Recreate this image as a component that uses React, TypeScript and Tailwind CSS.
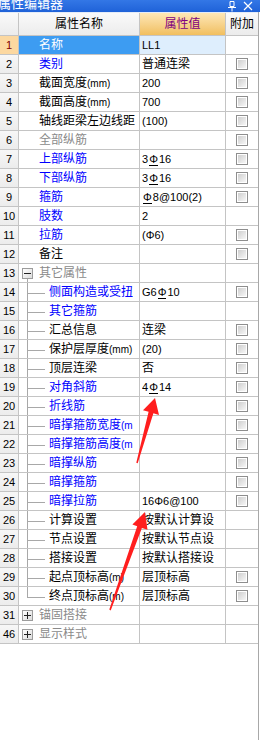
import React from 'react';

type Row = {
  n: number;
  name: string;
  val?: string;
  cb?: boolean;
  c?: 'b' | 'g' | 'k';
  kind?: 'top' | 'child' | 'group';
  open?: boolean;
  last?: boolean;
  sel?: boolean;
};

const rows: Row[] = [
  { n: 1, name: '名称', val: 'LL1', sel: true },
  { n: 2, name: '类别', val: '普通连梁', cb: true, c: 'b' },
  { n: 3, name: '截面宽度(mm)', val: '200', cb: true },
  { n: 4, name: '截面高度(mm)', val: '700', cb: true },
  { n: 5, name: '轴线距梁左边线距离(mm)', val: '(100)', cb: true },
  { n: 6, name: '全部纵筋', val: '', cb: true, c: 'g' },
  { n: 7, name: '上部纵筋', val: '3⊕16', cb: true, c: 'b' },
  { n: 8, name: '下部纵筋', val: '3⊕16', cb: true, c: 'b' },
  { n: 9, name: '箍筋', val: '⊕8@100(2)', cb: true, c: 'b' },
  { n: 10, name: '肢数', val: '2', c: 'b' },
  { n: 11, name: '拉筋', val: '(Φ6)', cb: true, c: 'b' },
  { n: 12, name: '备注', val: '', cb: true },
  { n: 13, name: '其它属性', kind: 'group', open: true },
  { n: 14, name: '侧面构造或受扭筋', val: 'G6⊕10', cb: true, c: 'b', kind: 'child' },
  { n: 15, name: '其它箍筋', val: '', c: 'b', kind: 'child' },
  { n: 16, name: '汇总信息', val: '连梁', cb: true, kind: 'child' },
  { n: 17, name: '保护层厚度(mm)', val: '(20)', cb: true, kind: 'child' },
  { n: 18, name: '顶层连梁', val: '否', cb: true, kind: 'child' },
  { n: 19, name: '对角斜筋', val: '4⊕14', cb: true, c: 'b', kind: 'child' },
  { n: 20, name: '折线筋', val: '', cb: true, c: 'b', kind: 'child' },
  { n: 21, name: '暗撑箍筋宽度(mm)', val: '', cb: true, c: 'b', kind: 'child' },
  { n: 22, name: '暗撑箍筋高度(mm)', val: '', cb: true, c: 'b', kind: 'child' },
  { n: 23, name: '暗撑纵筋', val: '', cb: true, c: 'b', kind: 'child' },
  { n: 24, name: '暗撑箍筋', val: '', cb: true, c: 'b', kind: 'child' },
  { n: 25, name: '暗撑拉筋', val: '16Φ6@100', cb: true, c: 'b', kind: 'child' },
  { n: 26, name: '计算设置', val: '按默认计算设置', kind: 'child' },
  { n: 27, name: '节点设置', val: '按默认节点设置', kind: 'child' },
  { n: 28, name: '搭接设置', val: '按默认搭接设置', kind: 'child' },
  { n: 29, name: '起点顶标高(m)', val: '层顶标高', cb: true, kind: 'child' },
  { n: 30, name: '终点顶标高(m)', val: '层顶标高', cb: true, kind: 'child', last: true },
  { n: 31, name: '锚固搭接', kind: 'group', open: false },
  { n: 46, name: '显示样式', kind: 'group', open: false },
];

const CJK = /[\u4e00-\u9fff]/;

function Val({ v }: { v: string }) {
  const parts = v.split(/(⊕)/);
  return (
    <>
      {parts.map((p, i) =>
        p === '⊕' ? (
          <span key={i} className="inline-block mx-[1px] leading-[11px] border-b border-black">
            Φ
          </span>
        ) : (
          <span key={i}>{p}</span>
        )
      )}
    </>
  );
}

function NameText({ name }: { name: string }) {
  const m = name.match(/^([^(]*)(\((.*)\))?$/);
  const main = m ? m[1] : name;
  const unit = m && m[3] !== undefined ? m[3] : null;
  return (
    <>
      {main}
      {unit !== null && <span className="text-[10px]">({unit})</span>}
    </>
  );
}

function Check() {
  return (
    <div className="w-[12px] h-[12px] border border-[#8e8e8e] p-px bg-white">
      <div className="w-full h-full bg-linear-to-br from-[#cfcfcf] to-[#f7f7f7]" />
    </div>
  );
}

function Box({ open }: { open: boolean }) {
  return (
    <div className="w-[11px] h-[11px] border border-[#9c9c9c] bg-linear-to-br from-white to-[#dcdcdc] flex items-center justify-center relative">
      <div className="w-[7px] h-px bg-[#222]" />
      {!open && <div className="absolute w-px h-[7px] bg-[#222]" />}
    </div>
  );
}

const line = 'border-[#c4c4c4]';

function NameCell({ r }: { r: Row }) {
  const color = r.sel
    ? 'text-white'
    : r.c === 'b'
    ? 'text-[#0000ff]'
    : r.c === 'g' || r.kind === 'group'
    ? 'text-[#8a8a8a]'
    : 'text-black';
  const base = `w-[121px] h-full border-r border-b ${line} overflow-hidden flex items-stretch ${
    r.sel ? 'bg-[#3d9cf2]' : 'bg-white'
  }`;
  const txt = `h-[18px] leading-[18px] overflow-hidden whitespace-nowrap ${color}`;
  if (r.kind === 'group') {
    return (
      <div className={base}>
        <div className="ml-[3px] w-[11px] flex flex-col items-center shrink-0">
          <div className="h-[4px]" />
          <Box open={!!r.open} />
          {r.open && <div className="flex-1 w-px bg-[#a8a8a8]" />}
        </div>
        <div className={`ml-[6px] w-[90px] ${txt}`}>{r.name}</div>
      </div>
    );
  }
  if (r.kind === 'child') {
    return (
      <div className={base}>
        <div className="ml-[8px] w-[18px] flex flex-col shrink-0">
          <div className="h-[11px] border-l border-b border-[#a8a8a8]" />
          <div className={`flex-1 ${r.last ? '' : 'border-l border-[#a8a8a8]'}`} />
        </div>
        <div className={`ml-[4px] w-[84px] ${txt}`}>
          <NameText name={r.name} />
        </div>
      </div>
    );
  }
  return (
    <div className={base}>
      <div className={`ml-[20px] w-[96px] ${txt}`}>
        <NameText name={r.name} />
      </div>
    </div>
  );
}

function RowView({ r }: { r: Row }) {
  const v = r.val ?? '';
  const isCjk = CJK.test(v);
  return (
    <div className="flex h-[19px]">
      <div
        className={`w-[19px] h-full border-r border-b ${line} flex items-center justify-center text-[11px] font-['Liberation_Sans',sans-serif] ${
          r.sel ? 'bg-[#fcd8a0] text-[#800000]' : 'bg-linear-to-b from-[#f7f7f7] to-[#ececec] text-black'
        }`}
      >
        {r.n}
      </div>
      <NameCell r={r} />
      <div
        className={`w-[86px] h-full border-r border-b ${line} pl-[2px] overflow-hidden ${
          r.sel ? 'bg-[#deeefd]' : 'bg-white'
        }`}
      >
        <div
          className={`w-[72px] h-[18px] leading-[18px] overflow-hidden whitespace-nowrap text-black ${
            isCjk ? 'text-[12px]' : 'text-[11px]'
          }`}
        >
          <Val v={v} />
        </div>
      </div>
      <div className={`w-[32px] h-full border-b ${line} flex items-center justify-center bg-white`}>
        {r.cb && <Check />}
      </div>
    </div>
  );
}

export default function App() {
  return (
    <div className="relative w-[260px] h-[740px] bg-white overflow-hidden font-['Liberation_Sans','Noto_Sans_CJK_SC',sans-serif] text-[12px]">
      {/* title bar */}
      <div className="h-[12px] bg-linear-to-b from-[#3377e6] to-[#1f62d8] flex items-start overflow-hidden">
        <div className="-ml-[2px] -mt-[4px] text-white text-[13px] leading-[14px] font-['Noto_Sans_CJK_SC',sans-serif]">
          属性编辑器
        </div>
        <div className="flex-1" />
        <svg width="10" height="11" viewBox="0 0 10 11" className="mt-px mr-[6px]">
          <path d="M3 0.5h4v5h-4z" fill="none" stroke="white" strokeWidth="1" />
          <path d="M1 6.5h8M5 6.5v4" stroke="white" strokeWidth="1" />
        </svg>
        <svg width="10" height="10" viewBox="0 0 10 10" className="mt-px mr-[7px]">
          <path d="M1 1l8 8M9 1l-8 8" stroke="white" strokeWidth="1.2" />
        </svg>
      </div>
      <div className="w-[259px] h-[728px] border-r border-[#a8a8a8] flex flex-col">
        {/* header */}
        <div className="flex h-[24px] border-t border-[#e4ecf8]">
          <div className={`w-[19px] h-full border-r border-b ${line} bg-linear-to-b from-[#fafafa] to-[#ececec]`} />
          <div
            className={`w-[121px] h-full border-r border-b ${line} bg-linear-to-b from-[#fafafa] to-[#ececec] flex items-center justify-center text-black text-[12px]`}
          >
            属性名称
          </div>
          <div
            className={`w-[86px] h-full border-r border-b ${line} bg-linear-to-b from-[#fde7b6] to-[#f1bf5e] flex items-center justify-center text-[#800080] text-[12px]`}
          >
            属性值
          </div>
          <div
            className={`w-[32px] h-full border-b ${line} bg-linear-to-b from-[#fafafa] to-[#ececec] flex items-center justify-center text-black text-[12px]`}
          >
            附加
          </div>
        </div>
        {rows.map((r) => (
          <RowView key={r.n} r={r} />
        ))}
      </div>
      {/* red annotation arrows */}
      <svg className="absolute left-0 top-0 pointer-events-none" width="260" height="740" viewBox="0 0 260 740">
        <polygon
          points="155,398 159,415 153.4,413.2 137.7,463.3 136.3,462.7 148.6,411.8 143,410.3"
          fill="#ff1e1e"
        />
        <polygon
          points="145,512 147.5,529.8 141.9,527.9 110.7,610.4 109.3,609.6 137.2,526.2 132.4,524.4"
          fill="#ff1e1e"
        />
      </svg>
    </div>
  );
}
